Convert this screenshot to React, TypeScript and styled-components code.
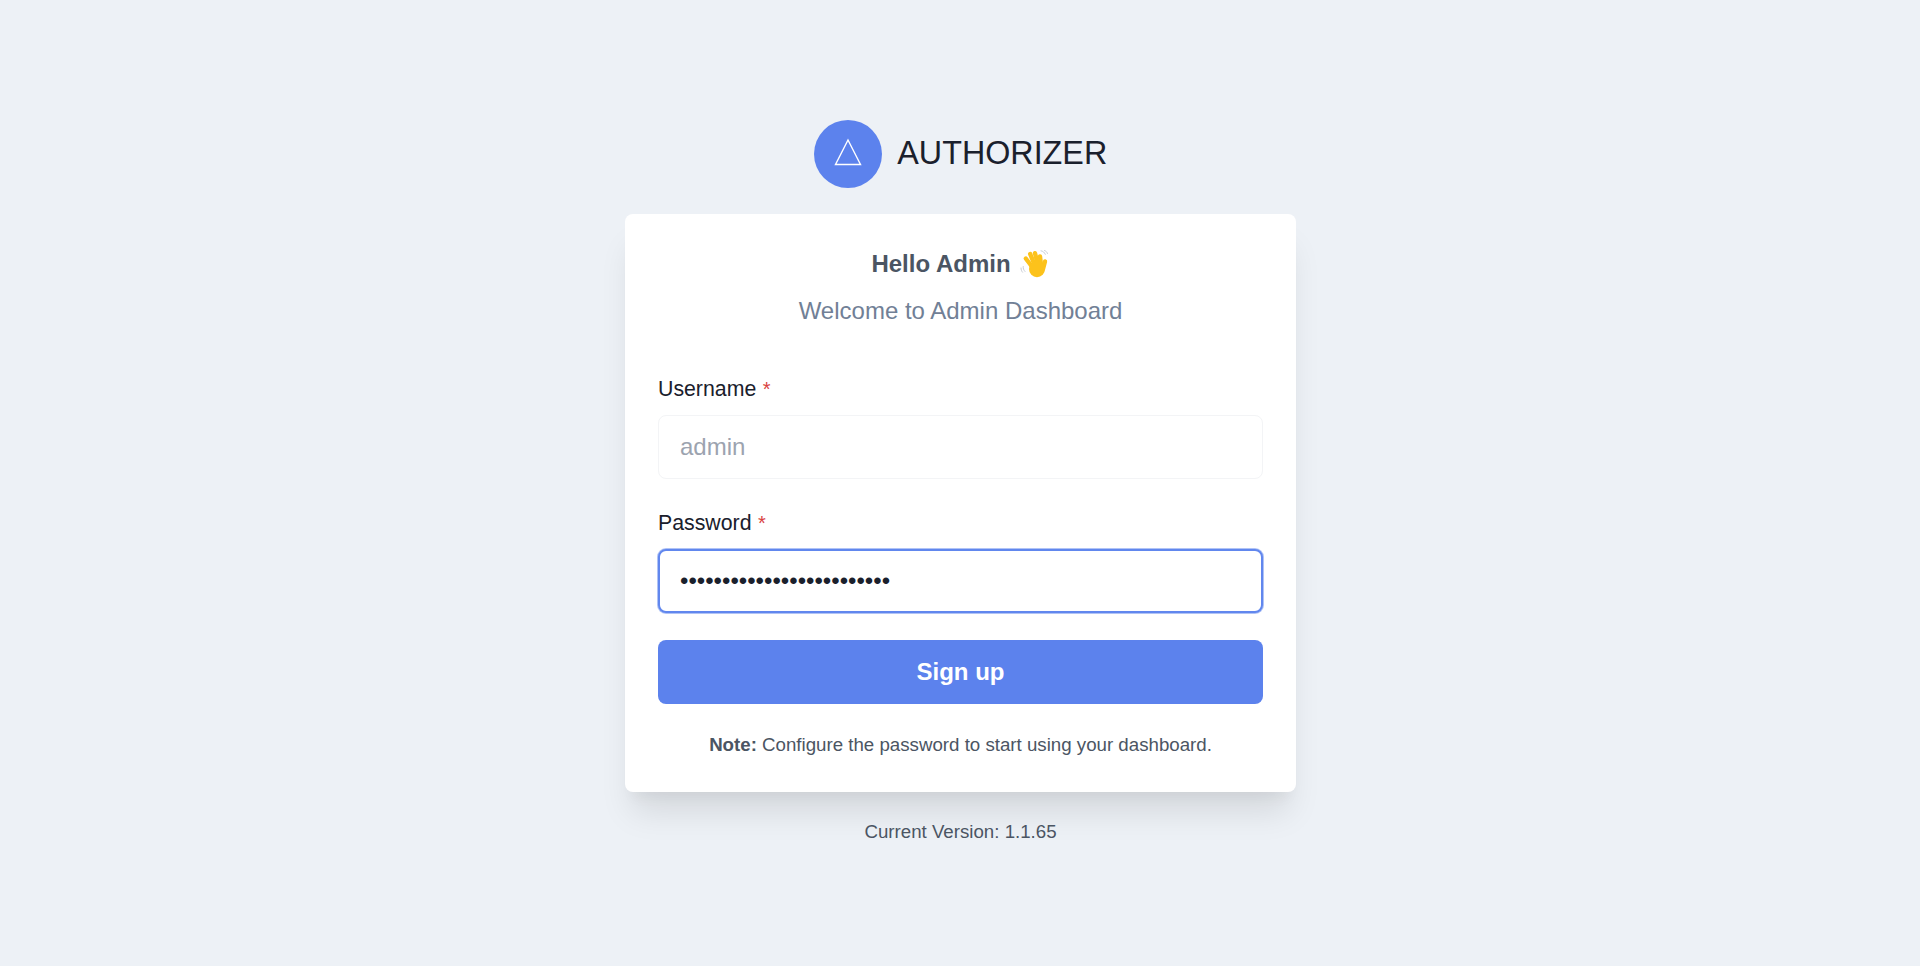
import React from "react";
import styled, { createGlobalStyle } from "styled-components";

const Global = createGlobalStyle`
  html, body { margin: 0; padding: 0; height: 100%; background: #edf1f6; }
  body { font-family: "Liberation Sans", Arial, sans-serif; color: #1a202c; }
  * { box-sizing: border-box; }
`;

const Page = styled.main`
  min-height: 966px;
  display: flex;
  flex-direction: column;
  align-items: center;
  padding: 120px 0 0 1px;
  background: #edf1f6;
`;

const Brand = styled.header`
  display: flex;
  align-items: center;
  gap: 15.500px;
  height: 67px;
  margin-bottom: 27px;
`;

const LogoCircle = styled.div`
  width: 68px;
  height: 68px;
  border-radius: 50%;
  background: #5c82ed;
  display: flex;
  align-items: center;
  justify-content: center;
`;

const BrandName = styled.h1`
  margin: 0 0 2px;
  font-size: 32.300px;
  font-weight: 400;
  line-height: 40px;
  color: #1a202c;
`;

const Card = styled.section`
  width: 671px;
  height: 578px;
  background: #fff;
  border-radius: 8px;
  padding: 32px 33px 0;
  box-shadow: 0 27px 33px -7px rgba(0, 0, 0, 0.1), 0 13px 13px -7px rgba(0, 0, 0, 0.04);
  display: flex;
  flex-direction: column;
`;

const Greeting = styled.h2`
  margin: 0;
  height: 36px;
  display: flex;
  align-items: center;
  justify-content: center;
  gap: 9px;
  font-size: 24px;
  font-weight: 700;
  color: #4b5563;
`;

const Welcome = styled.p`
  margin: 11px 0 0;
  text-align: center;
  font-size: 24px;
  line-height: 36px;
  color: #718096;
`;

const Form = styled.form`
  margin-top: 44px;
  display: flex;
  flex-direction: column;
`;

const Field = styled.div`
  display: flex;
  flex-direction: column;
  margin-bottom: 27px;
  & + & { margin-top: 1px; }
`;

const Label = styled.label`
  font-size: 21.300px;
  line-height: 32px;
  margin-bottom: 10px;
  color: #1a202c;
`;

const Required = styled.span`
  color: #d9423f;
  margin-left: 6.500px;
  font-size: 20px;
`;

const Input = styled.input<{ $focused?: boolean }>`
  width: 100%;
  height: 64px;
  padding: 0 ${(p) => (p.$focused ? "20px" : "21px")};
  font-family: inherit;
  font-size: 24px;
  color: #1a202c;
  background: #fff;
  outline: none;
  border-radius: 8px;
  border: ${(p) => (p.$focused ? "2px solid #6187ee" : "1px solid #f3f4f6")};
  box-shadow: ${(p) => (p.$focused ? "0 0 0 1px rgba(97, 135, 238, 0.5)" : "none")};
  &::placeholder { color: #9ca3af; opacity: 1; }
`;

const SubmitButton = styled.button`
  width: 100%;
  height: 64px;
  border: none;
  border-radius: 8px;
  background: #5c82ed;
  color: #fff;
  font-family: inherit;
  font-size: 24px;
  font-weight: 700;
`;

const Note = styled.p`
  margin: 27px 0 0;
  text-align: center;
  font-size: 18.700px;
  line-height: 28px;
  color: #4b5563;
`;

const Version = styled.footer`
  margin-top: 26px;
  font-size: 18.700px;
  line-height: 28px;
  color: #4b5563;
`;

const Wave = () => (
  <svg width="30" height="30" viewBox="0 0 30 30" aria-hidden="true">
    <g fill="none" stroke="#c9ced6" strokeWidth="1" strokeLinecap="round">
      <path d="M3.200 17.500c-.2 2 .4 3.500 1.800 5M1 19c0 1.700.5 3 1.500 4.200" />
      <path d="M21 1.800c2 .3 3.400 1.500 4.300 3.500M24.500 1.500c1.500.5 2.500 1.500 3 3" />
    </g>
    <g fill="none" stroke="#fcc21b" strokeWidth="4.400" strokeLinecap="round">
      <path d="M13 19 5.800 9.500" />
      <path d="M15 17 10.200 5" />
      <path d="M18 16 15 4.200" />
      <path d="M21 16 20 7.500" />
      <path d="M23 20 25 12.500" />
    </g>
    <ellipse cx="17" cy="20" rx="8" ry="8.200" fill="#fcc21b" />
  </svg>
);

export default function App() {
  return (
    <>
      <Global />
      <Page>
        <Brand>
          <LogoCircle>
            <svg width="30" height="34" viewBox="0 0 30 34" aria-hidden="true">
              <path d="M15 3 27.500 27.500H2.500Z" fill="none" stroke="#fff" strokeWidth="1.400" />
            </svg>
          </LogoCircle>
          <BrandName>AUTHORIZER</BrandName>
        </Brand>
        <Card>
          <Greeting>
            Hello Admin <Wave />
          </Greeting>
          <Welcome>Welcome to Admin Dashboard</Welcome>
          <Form onSubmit={(e) => e.preventDefault()}>
            <Field>
              <Label>
                Username<Required>*</Required>
              </Label>
              <Input type="text" placeholder="admin" readOnly />
            </Field>
            <Field>
              <Label>
                Password<Required>*</Required>
              </Label>
              <Input $focused type="password" defaultValue="administrator-password-12" />
            </Field>
            <SubmitButton type="submit">Sign up</SubmitButton>
          </Form>
          <Note>
            <b>Note:</b> Configure the password to start using your dashboard.
          </Note>
        </Card>
        <Version>Current Version: 1.1.65</Version>
      </Page>
    </>
  );
}
